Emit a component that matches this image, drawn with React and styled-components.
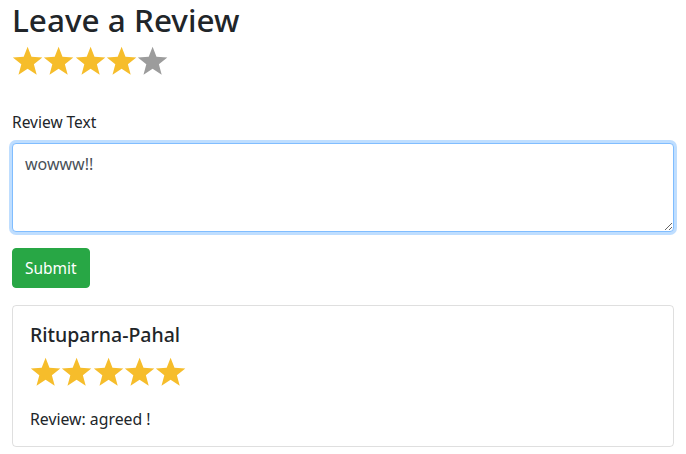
import React, { useEffect, useRef } from "react";
import styled, { createGlobalStyle } from "styled-components";

const GlobalStyle = createGlobalStyle`
  body {
    margin: 0;
    background: #ffffff;
    font-family: "Noto Sans", "Open Sans", sans-serif;
    color: #212529;
  }
`;

const Page = styled.div`
  padding: 0 12px;
`;

const Title = styled.h2`
  margin: 0 0 6px;
  font-size: 31.5px;
  font-weight: 500;
  line-height: 40px;
  color: #212529;
`;

const StarRow = styled.div`
  display: flex;
  height: 30px;
`;

const Form = styled.form`
  margin-top: 34px;
`;

const Label = styled.label`
  display: block;
  font-size: 15.5px;
  line-height: 24px;
  margin-bottom: 9px;
`;

const TextArea = styled.textarea`
  display: block;
  box-sizing: border-box;
  width: 100%;
  height: 89px;
  padding: 8px 12px 6px;
  font-family: inherit;
  font-size: 16px;
  line-height: 24px;
  color: #495057;
  border: 1px solid #80bdff;
  border-radius: 4px;
  box-shadow: 0 0 0 3px rgba(0, 123, 255, 0.25);
  outline: none;
  caret-color: #212529;
  margin-bottom: 16px;
`;

const Button = styled.button`
  height: 40px;
  padding: 0 12px;
  font-family: inherit;
  font-size: 15.5px;
  color: #ffffff;
  background: #28a745;
  border: 1px solid #28a745;
  border-radius: 4px;
`;

const Card = styled.div`
  margin-top: 17px;
  border: 1px solid rgba(0, 0, 0, 0.125);
  border-radius: 4px;
  padding: 16px 17px 15px;
`;

const Name = styled.h5`
  margin: 0 0 9px;
  font-size: 19.5px;
  font-weight: 500;
  line-height: 26px;
`;

const ReviewText = styled.p`
  margin: 20px 0 0;
  font-size: 15.8px;
  line-height: 24px;
`;

function Star({ filled }) {
  const pts = [];
  for (let i = 0; i < 10; i++) {
    const r = i % 2 === 0 ? 15.5 : 6.6;
    const a = -Math.PI / 2 + (i * Math.PI) / 5;
    pts.push(`${(15.6 + r * Math.cos(a)).toFixed(2)},${(16.2 + r * Math.sin(a)).toFixed(2)}`);
  }
  return (
    <svg width="31.3" height="30" viewBox="0 0 31.3 30">
      <polygon points={pts.join(" ")} fill={filled ? "#f6bd2b" : "#9c9c9c"} />
    </svg>
  );
}

function Stars({ value }) {
  return (
    <StarRow>
      {[1, 2, 3, 4, 5].map((n) => (
        <Star key={n} filled={n <= value} />
      ))}
    </StarRow>
  );
}

export default function App() {
  const ref = useRef(null);
  useEffect(() => {
    const el = ref.current;
    if (el) {
      el.focus();
      el.setSelectionRange(el.value.length, el.value.length);
    }
  }, []);

  return (
    <>
      <GlobalStyle />
      <Page>
        <Title>Leave a Review</Title>
        <Stars value={4} />
        <Form onSubmit={(e) => e.preventDefault()}>
          <Label htmlFor="review">Review Text</Label>
          <TextArea id="review" ref={ref} defaultValue="wowww!!" />
          <Button type="submit">Submit</Button>
        </Form>
        <Card>
          <Name>Rituparna-Pahal</Name>
          <Stars value={5} />
          <ReviewText>Review: agreed !</ReviewText>
        </Card>
      </Page>
    </>
  );
}
